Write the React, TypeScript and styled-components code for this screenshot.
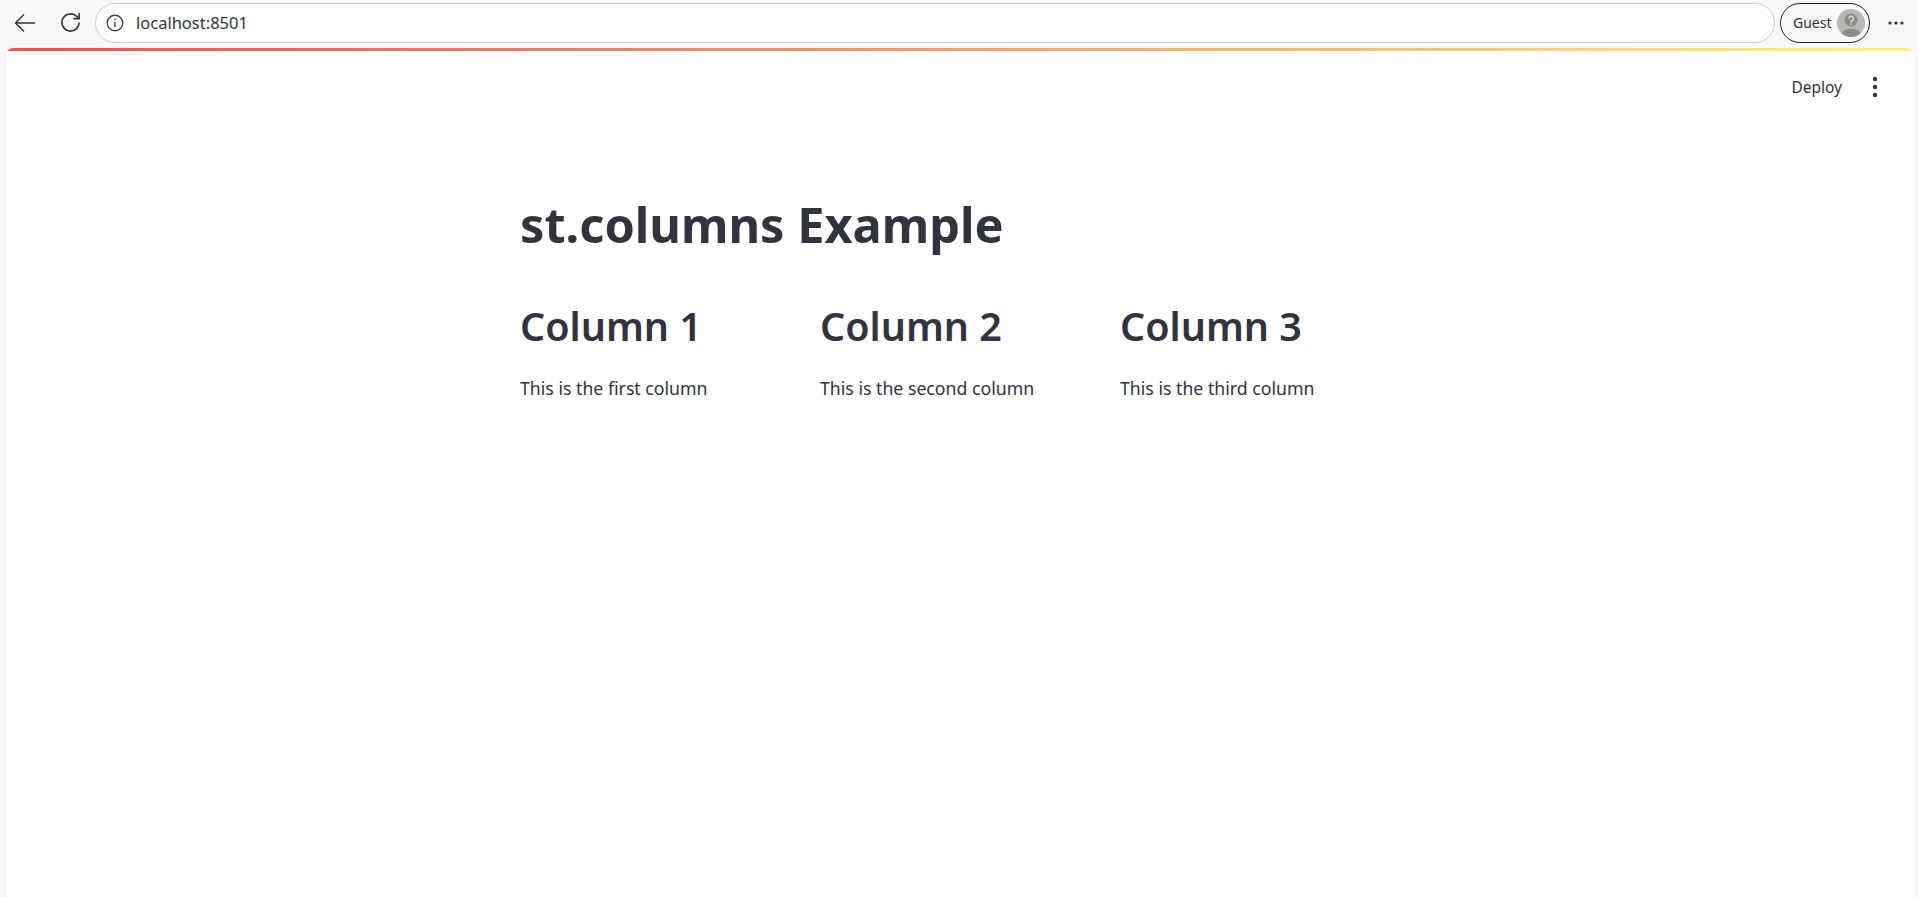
import React from "react";
import styled, { createGlobalStyle } from "styled-components";

const Global = createGlobalStyle`
  html, body { margin: 0; padding: 0; height: 100%; background: #f7f7f7; overflow: hidden; }
  #root { height: 100%; }
  * { box-sizing: border-box; }
`;
const Frame = styled.div`height: 897px; display: flex; flex-direction: column; font-family: "Noto Sans", "Open Sans", sans-serif; color: #31333f;`;
const BrowserBar = styled.header`height: 48px; flex: none; display: flex; align-items: center; padding-bottom: 3px; background: #f7f7f7;`;
const IconButton = styled.span<{ $w: number; $inset?: number }>`width: ${p => p.$w}px; padding-left: ${p => p.$inset ?? 0}px; display: flex; justify-content: center; align-items: center; flex: none;`;
const Address = styled.div`flex: 1; height: 40px; margin-left: 5px; border: 1px solid #c9cbcd; border-radius: 20px; background: #fdfdfd; display: flex; align-items: center; gap: 12px; padding: 0 10px; font-size: 16.5px; color: #33363a;`;
const Guest = styled.div`margin-left: 5px; height: 40px; width: 90px; flex: none; border: 1.5px solid #1f1f1f; border-radius: 20px; display: flex; align-items: center; justify-content: space-between; padding: 0 4px 0 12px; font-size: 14px; color: #333; background: #f7f7f7;`;
const Avatar = styled.span`width: 28px; height: 28px; border-radius: 50%; background: #b8b8b4; overflow: hidden; display: flex;`;
const Page = styled.main`flex: 1; margin: 0 3px 0 5px; background: #fff; border-radius: 8px 8px 0 0; border-left: 1px solid #ededed; overflow: hidden; display: flex; flex-direction: column;`;
const Rainbow = styled.div`height: 3px; flex: none; background: linear-gradient(90deg, #ff4b4b, #fff27a);`;
const Toolbar = styled.div`display: flex; justify-content: flex-end; align-items: center; gap: 23px; height: 71px; padding-right: 30px; font-size: 15.5px;`;
const Content = styled.div`width: 736px; margin-left: 514px; padding-top: 71px;`;
const Title = styled.h1`margin: 0; font-size: 48.7px; line-height: 62px; font-weight: 700; white-space: nowrap;`;
const Columns = styled.div`display: grid; grid-template-columns: repeat(3, 300px); margin-top: 46px;`;
const Heading = styled.h2`margin: 0; font-size: 39.5px; line-height: 50px; font-weight: 600;`;
const Para = styled.p`margin: 24px 0 0; font-size: 17.7px; line-height: 26px;`;

export default function App() {
  return (
    <Frame>
      <Global />
      <BrowserBar>
        <IconButton $w={50}>
          <svg width="22" height="20" viewBox="0 0 22 20" fill="none" stroke="#333" strokeWidth="1.4"><path d="M21 10H1.5M10 1.5L1.5 10 10 18.5" /></svg>
        </IconButton>
        <IconButton $w={40}>
          <svg width="23" height="23" viewBox="0 0 24 24" fill="none" stroke="#333" strokeWidth="1.7"><path d="M21 12a9 9 0 1 1-9-9c2.52 0 4.93 1 6.74 2.74L21 8" /><path d="M21 2v6h-6" /></svg>
        </IconButton>
        <Address>
          <svg width="18" height="18" viewBox="0 0 18 18" fill="none" stroke="#444" strokeWidth="1.4"><circle cx="9" cy="9" r="7.8" /><path d="M9 8v5M9 4.8v1.6" /></svg>
          <span>localhost:8501</span>
        </Address>
        <Guest>
          <span>Guest</span>
          <Avatar>
            <svg width="28" height="28" viewBox="0 0 28 28">
              <path d="M3 28c1-6 5-8 11-8s10 2 11 8z" fill="#8a8a86" />
              <circle cx="14" cy="11" r="6.5" fill="#8a8a86" />
              <path d="M11.8 9.6a2.3 2.3 0 1 1 3.4 2c-.8.5-1.2.9-1.2 1.7" fill="none" stroke="#ddd" strokeWidth="1.4" />
              <circle cx="14" cy="15" r=".9" fill="#ddd" />
            </svg>
          </Avatar>
        </Guest>
        <IconButton $w={48} $inset={4}>
          <svg width="18" height="6" viewBox="0 0 18 6" fill="#333"><circle cx="3" cy="3" r="1.6" /><circle cx="9" cy="3" r="1.6" /><circle cx="15" cy="3" r="1.6" /></svg>
        </IconButton>
      </BrowserBar>
      <Page>
        <Rainbow />
        <Toolbar>
          <span>Deploy</span>
          <svg width="20" height="24" viewBox="0 0 20 24" fill="#31333f"><circle cx="10" cy="4" r="2.2" /><circle cx="10" cy="12" r="2.2" /><circle cx="10" cy="20" r="2.2" /></svg>
        </Toolbar>
        <Content>
          <Title>st.columns Example</Title>
          <Columns>
            <div><Heading>Column 1</Heading><Para>This is the first column</Para></div>
            <div><Heading>Column 2</Heading><Para>This is the second column</Para></div>
            <div><Heading>Column 3</Heading><Para>This is the third column</Para></div>
          </Columns>
        </Content>
      </Page>
    </Frame>
  );
}
